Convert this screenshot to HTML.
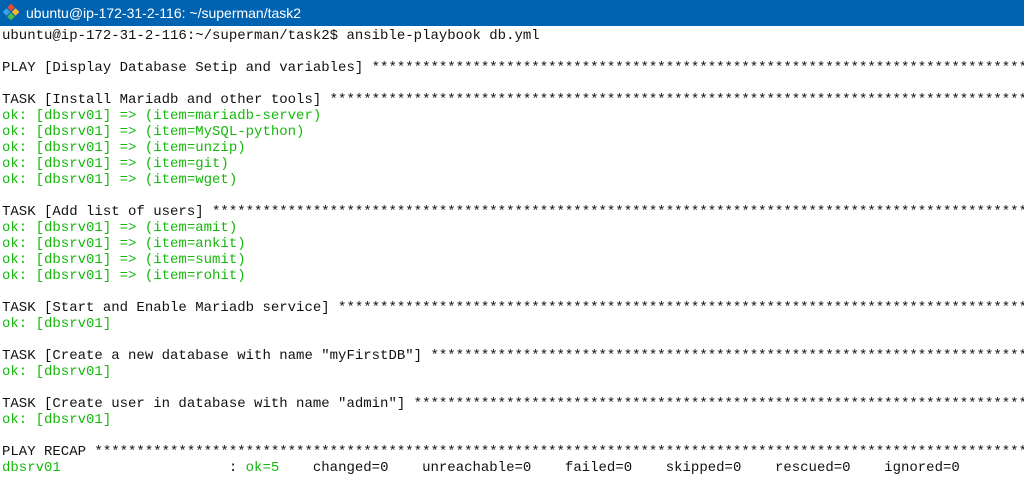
<!DOCTYPE html>
<html><head><meta charset="utf-8"><style>
html,body{margin:0;padding:0;width:1024px;height:489px;overflow:hidden;background:#fff}
.tb{height:26px;background:#0063b1;color:#fff;font:14px "Liberation Sans",sans-serif;line-height:26px;position:relative}
.tb span{position:absolute;left:26px;top:0}
.ic{position:absolute;left:5px;top:6px;width:12px;height:12px;transform:rotate(45deg)}
pre{margin:0;padding:0 0 0 2px;font:14px/16px "Liberation Mono",monospace;color:#111;white-space:pre;overflow:hidden;position:absolute;top:28px;left:0;width:1022px}
.g{color:#16b80c}
</style></head><body>
<div class="tb"><svg class="ic" viewBox="0 0 12 12"><rect x="0" y="0" width="5.5" height="5.5" fill="#e84a2c"/><rect x="6.5" y="0" width="5.5" height="5.5" fill="#f9b52c"/><rect x="0" y="6.5" width="5.5" height="5.5" fill="#3aa3e6"/><rect x="6.5" y="6.5" width="5.5" height="5.5" fill="#55b548"/></svg><span>ubuntu@ip-172-31-2-116: ~/superman/task2</span></div>
<pre>ubuntu@ip-172-31-2-116:~/superman/task2$ ansible-playbook db.yml

PLAY [Display Database Setip and variables] *****************************************************************************************************

TASK [Install Mariadb and other tools] **********************************************************************************************************
<span class="g">ok: [dbsrv01] =&gt; (item=mariadb-server)
ok: [dbsrv01] =&gt; (item=MySQL-python)
ok: [dbsrv01] =&gt; (item=unzip)
ok: [dbsrv01] =&gt; (item=git)
ok: [dbsrv01] =&gt; (item=wget)</span>

TASK [Add list of users] ************************************************************************************************************************
<span class="g">ok: [dbsrv01] =&gt; (item=amit)
ok: [dbsrv01] =&gt; (item=ankit)
ok: [dbsrv01] =&gt; (item=sumit)
ok: [dbsrv01] =&gt; (item=rohit)</span>

TASK [Start and Enable Mariadb service] *********************************************************************************************************
<span class="g">ok: [dbsrv01]</span>

TASK [Create a new database with name "myFirstDB"] **********************************************************************************************
<span class="g">ok: [dbsrv01]</span>

TASK [Create user in database with name "admin"] ************************************************************************************************
<span class="g">ok: [dbsrv01]</span>

PLAY RECAP **************************************************************************************************************************************
<span class="g">dbsrv01</span>                    : <span class="g">ok=5</span>    changed=0    unreachable=0    failed=0    skipped=0    rescued=0    ignored=0
</pre>
</body></html>
